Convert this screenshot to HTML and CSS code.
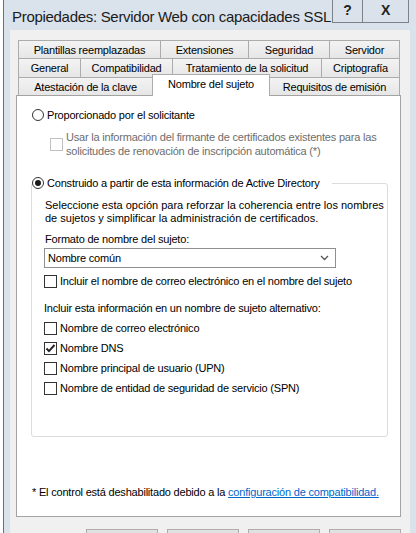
FILE: index.html
```html
<!DOCTYPE html>
<html lang="es">
<head>
  <meta charset="UTF-8">
  <title>Propiedades: Servidor Web con capacidades SSL</title>
  <link rel="stylesheet" href="styles.css">
</head>
<body>
  <div class="window">
    <div class="titlebar">
      <div class="title">Propiedades: Servidor Web con capacidades SSL</div>
      <div class="caption-btns">
        <div class="cap-btn help">?</div>
        <div class="cap-btn close">X</div>
      </div>
    </div>

    <div class="client">
      <div class="tabs">
        <div class="tab-row row1">
          <div class="tab" style="width:143px">Plantillas reemplazadas</div>
          <div class="tab" style="width:89px">Extensiones</div>
          <div class="tab" style="width:82px">Seguridad</div>
          <div class="tab" style="width:71px">Servidor</div>
        </div>
        <div class="tab-row row2">
          <div class="tab" style="width:63px">General</div>
          <div class="tab" style="width:93px">Compatibilidad</div>
          <div class="tab" style="width:150px">Tratamiento de la solicitud</div>
          <div class="tab" style="width:79px">Criptografía</div>
        </div>
        <div class="tab-row row3">
          <div class="tab" style="width:135px">Atestación de la clave</div>
          <div class="tab selected" style="width:118px">Nombre del sujeto</div>
          <div class="tab" style="width:131px">Requisitos de emisión</div>
        </div>
      </div>

      <div class="panel">
        <div class="option">
          <span class="radio"></span>
          <span>Proporcionado por el solicitante</span>
        </div>
        <div class="sub-option disabled">
          <span class="box"></span>
          <span class="multi">Usar la información del firmante de certificados existentes para las<br>solicitudes de renovación de inscripción automática (*)</span>
        </div>

        <fieldset class="group">
          <legend class="option">
            <span class="radio on"></span>
            <span>Construido a partir de esta información de Active Directory</span>
          </legend>
          <div class="group-body">
            <p class="desc">Seleccione esta opción para reforzar la coherencia entre los nombres<br>de sujetos y simplificar la administración de certificados.</p>
            <div class="label">Formato de nombre del sujeto:</div>
            <div class="select">
              <span>Nombre común</span>
              <svg width="9" height="6" viewBox="0 0 9 6"><path d="M1 1 L4.5 4.5 L8 1" fill="none" stroke="#555" stroke-width="1.3"/></svg>
            </div>
            <div class="check first">
              <span class="box"></span>
              <span>Incluir el nombre de correo electrónico en el nombre del sujeto</span>
            </div>
            <div class="label alt">Incluir esta información en un nombre de sujeto alternativo:</div>
            <div class="check">
              <span class="box"></span>
              <span>Nombre de correo electrónico</span>
            </div>
            <div class="check">
              <span class="box">
                <svg width="11" height="11" viewBox="0 0 11 11"><path d="M1.5 5.5 L4 8.2 L9.5 2" fill="none" stroke="#222" stroke-width="1.9"/></svg>
              </span>
              <span>Nombre DNS</span>
            </div>
            <div class="check">
              <span class="box"></span>
              <span>Nombre principal de usuario (UPN)</span>
            </div>
            <div class="check">
              <span class="box"></span>
              <span>Nombre de entidad de seguridad de servicio (SPN)</span>
            </div>
          </div>
        </fieldset>

        <p class="note">* El control está deshabilitado debido a la <a href="#">configuración de compatibilidad.</a></p>
      </div>

      <div class="buttons">
        <div class="btn"></div>
        <div class="btn"></div>
        <div class="btn"></div>
        <div class="btn"></div>
      </div>
    </div>
  </div>
</body>
</html>
```

FILE: styles.css
```css
:root {
  --frame: #dae2eb;
  --client: #f0f0f0;
  --tab-border: #acacac;
  --text: #000;
  --muted: #6d6d6d;
}

* {
  box-sizing: border-box;
}

body {
  margin: 0;
  width: 416px;
  height: 533px;
  overflow: hidden;
  background: #fff;
  font-family: "Liberation Sans", Arial, sans-serif;
  font-size: 11px;
  letter-spacing: -0.2px;
  color: var(--text);
}

.window {
  margin-left: 3px;
  width: 413px;
  height: 533px;
  border-left: 1px solid #6e6e6e;
  background: var(--frame);
}

.titlebar {
  display: flex;
  height: 30px;
}

.title {
  flex: 1;
  padding: 8px 0 0 8px;
  font-size: 15px;
  letter-spacing: -0.3px;
  color: #1b1b1b;
  white-space: nowrap;
}

.caption-btns {
  display: flex;
  height: 23px;
  margin-right: 7px;
}

.cap-btn {
  height: 23px;
  border: 1px solid #7d8288;
  border-top: none;
  display: flex;
  align-items: center;
  justify-content: center;
  font-weight: bold;
  font-size: 14px;
  color: #222;
  padding-bottom: 2px;
}

.help {
  width: 31px;
}

.close {
  width: 47px;
  margin-left: -1px;
}

.client {
  margin-left: 6px;
  width: 400px;
  height: 503px;
  background: var(--client);
  padding: 10px 0 0 6px;
}

/* tabs */
.tabs {
  margin-left: 2px;
}

.tab-row {
  display: flex;
  align-items: flex-end;
}

.row1 { height: 18px; }
.row2 { height: 19px; }
.row3 { height: 18px; }

.tab {
  height: 100%;
  margin-right: -1px;
  border: 1px solid var(--tab-border);
  border-bottom: none;
  background: linear-gradient(#f3f3f3, #e6e6e6);
  text-align: center;
  white-space: nowrap;
  display: flex;
  align-items: center;
  justify-content: center;
}

.tab.selected {
  position: relative;
  z-index: 1;
  height: 22px;
  margin-bottom: -1px;
  align-self: flex-end;
  background: #fff;
  align-items: flex-start;
  padding-top: 3px;
}

/* page */
.panel {
  position: relative;
  width: 385px;
  height: 422px;
  background: #fff;
  border: 1px solid #a3a3a3;
  padding: 12px 0 0 14px;
}

.option {
  display: flex;
  align-items: center;
  gap: 3px;
  height: 14px;
  margin-left: 1px;
}

.radio {
  width: 12px;
  height: 12px;
  border: 1px solid #333;
  border-radius: 50%;
  background: #fff;
  display: flex;
  align-items: center;
  justify-content: center;
}

.radio.on::after {
  content: "";
  width: 6px;
  height: 6px;
  border-radius: 50%;
  background: #1a1a1a;
}

.box {
  flex: none;
  width: 13px;
  height: 13px;
  border: 1px solid #333;
  background: #fff;
  display: flex;
  align-items: center;
  justify-content: center;
}

.sub-option {
  display: flex;
  align-items: center;
  gap: 3px;
  margin: 8px 0 0 19px;
}

.multi {
  line-height: 14px;
}

.disabled {
  color: var(--muted);
}

.disabled .box {
  border-color: #c0c0c0;
}

.group {
  margin: 18px 0 0 0;
  width: 357px;
  padding: 0;
  border: 1px solid #dcdcdc;
  border-radius: 3px;
}

.group legend {
  padding: 0 12px 0 0;
  margin-left: 0;
}

.group-body {
  padding: 9px 0 38px 13px;
}

.desc {
  margin: 0;
  line-height: 13px;
  letter-spacing: 0;
}

.label {
  margin-top: 7px;
  height: 14px;
  line-height: 14px;
}

.label.alt {
  margin-top: 10px;
  margin-left: -1px;
}

.select {
  margin: 2px 0 0 -1px;
  width: 292px;
  height: 20px;
  border: 1px solid #8e8f8f;
  display: flex;
  align-items: center;
  justify-content: space-between;
  padding: 0 6px 0 3px;
}

.check {
  display: flex;
  align-items: center;
  gap: 3px;
  height: 20px;
  margin-left: -1px;
}

.check.first {
  margin-top: 3px;
}

.label.alt + .check {
  margin-top: 3px;
}

.note {
  margin: 48px 0 0 1px;
  line-height: 14px;
}

.note a {
  color: #0066cc;
}

.buttons {
  display: flex;
  justify-content: flex-end;
  gap: 9px;
  width: 385px;
  margin-top: 12px;
}

.btn {
  width: 72px;
  height: 23px;
  border: 1px solid #adadad;
  background: #e1e1e1;
}
```
